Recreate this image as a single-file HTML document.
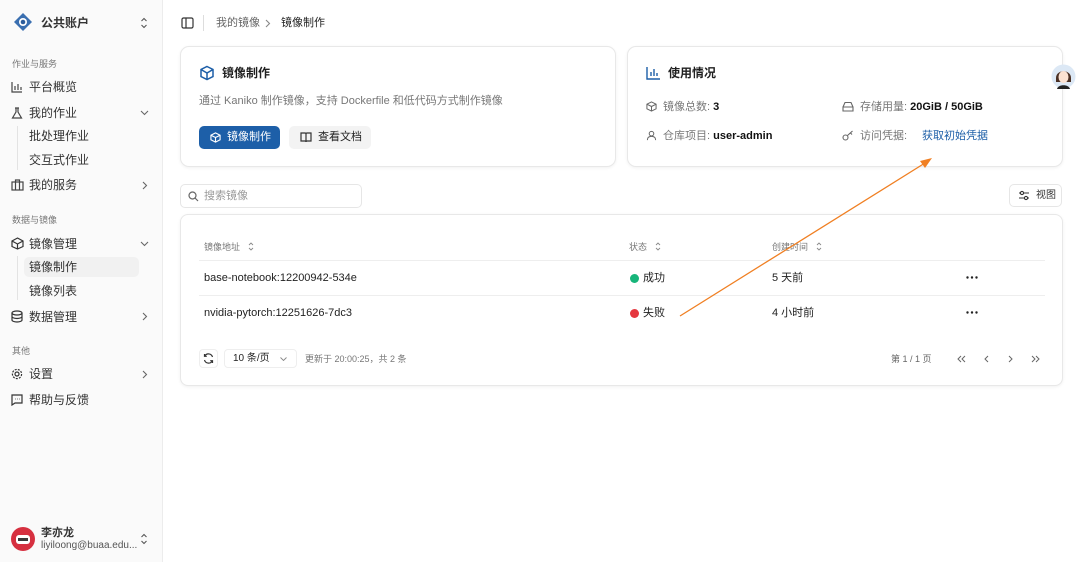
<!DOCTYPE html>
<html><head><meta charset="utf-8"><style>
*{box-sizing:border-box;margin:0;padding:0}
body{width:1080px;height:562px;overflow:hidden;background:#fff;font-family:"Liberation Sans","Noto Sans CJK SC",sans-serif;color:#1f1f1f;position:relative}
.sb{position:absolute;left:0;top:0;width:163px;height:562px;background:#fafafa;border-right:1px solid #ececec}
.a{position:absolute;font-size:12px;color:#333;white-space:nowrap;line-height:14px}
.g{position:absolute;font-size:9px;color:#777;line-height:11px}
.ic{position:absolute}
.card{position:absolute;background:#fff;border:1px solid #e8e8e8;border-radius:9px;box-shadow:0 1px 3px rgba(0,0,0,.06)}
.t{position:absolute;white-space:nowrap;line-height:14px}
</style></head><body>
<div class="sb">
<svg class="ic" style="left:13px;top:12px" width="20" height="20" viewBox="0 0 20 20"><path d="M10 1L19 10L10 19L1 10Z" fill="#3a6fb0"/><circle cx="10" cy="10" r="4" fill="#fff"/><circle cx="10" cy="10" r="2.3" fill="#2c5d9c"/></svg>
<div class="a" style="left:41px;top:16px;font-weight:bold;font-size:12px">公共账户</div>
<svg class="ic" style="left:140px;top:17px" width="8" height="12" viewBox="0 0 8 12" fill="none" stroke="#555" stroke-width="1.1"><path d="M1.5 4L4 1.5L6.5 4M1.5 8L4 10.5L6.5 8"/></svg>
<div class="g" style="left:12px;top:59px">作业与服务</div>
<svg class="ic" style="left:11px;top:81px" width="12" height="12" viewBox="0 0 12 12" fill="none" stroke="#444" stroke-width="1.2"><path d="M1 1V11H11M4 9V5M7 9V3M10 9V6"/></svg>
<div class="a" style="left:29px;top:80px">平台概览</div>
<svg class="ic" style="left:11px;top:107px" width="12" height="12" viewBox="0 0 12 12" fill="none" stroke="#444" stroke-width="1.2"><path d="M4 1H8M5 1V5L1.5 11H10.5L7 5V1"/></svg>
<div class="a" style="left:29px;top:106px">我的作业</div>
<svg class="ic" style="left:140px;top:110px" width="9" height="6" viewBox="0 0 9 6" fill="none" stroke="#666" stroke-width="1.1"><path d="M1 1L4.5 4.5L8 1"/></svg>
<div style="position:absolute;left:17px;top:126px;width:1px;height:44px;background:#e3e3e3"></div>
<div class="a" style="left:29px;top:129px">批处理作业</div>
<div class="a" style="left:29px;top:153px">交互式作业</div>
<svg class="ic" style="left:11px;top:179px" width="13" height="12" viewBox="0 0 13 12" fill="none" stroke="#444" stroke-width="1.2"><rect x="1" y="3" width="11" height="8"/><path d="M4.5 3V1H8.5V3M4.5 3V11M8.5 3V11"/></svg>
<div class="a" style="left:29px;top:178px">我的服务</div>
<svg class="ic" style="left:142px;top:181px" width="6" height="9" viewBox="0 0 6 9" fill="none" stroke="#666" stroke-width="1.1"><path d="M1 1L4.5 4.5L1 8"/></svg>
<div class="g" style="left:12px;top:215px">数据与镜像</div>
<svg class="ic" style="left:11px;top:237px" width="13" height="13" viewBox="0 0 13 13" fill="none" stroke="#333" stroke-width="1.2"><path d="M6.5 1L12 4V9.5L6.5 12L1 9.5V4Z M1 4L6.5 7L12 4M6.5 7V12"/></svg>
<div class="a" style="left:29px;top:237px">镜像管理</div>
<svg class="ic" style="left:140px;top:241px" width="9" height="6" viewBox="0 0 9 6" fill="none" stroke="#666" stroke-width="1.1"><path d="M1 1L4.5 4.5L8 1"/></svg>
<div style="position:absolute;left:17px;top:256px;width:1px;height:44px;background:#e3e3e3"></div>
<div style="position:absolute;left:24px;top:257px;width:115px;height:20px;background:#f1f1f1;border-radius:5px"></div>
<div class="a" style="left:29px;top:260px">镜像制作</div>
<div class="a" style="left:29px;top:284px">镜像列表</div>
<svg class="ic" style="left:11px;top:310px" width="12" height="13" viewBox="0 0 12 13" fill="none" stroke="#333" stroke-width="1.2"><ellipse cx="6" cy="3" rx="5" ry="2"/><path d="M1 3V10C1 11 3 12 6 12S11 11 11 10V3M1 6.5C1 7.5 3 8.5 6 8.5S11 7.5 11 6.5"/></svg>
<div class="a" style="left:29px;top:310px">数据管理</div>
<svg class="ic" style="left:142px;top:312px" width="6" height="9" viewBox="0 0 6 9" fill="none" stroke="#666" stroke-width="1.1"><path d="M1 1L4.5 4.5L1 8"/></svg>
<div class="g" style="left:12px;top:346px">其他</div>
<svg class="ic" style="left:11px;top:368px" width="12" height="12" viewBox="0 0 12 12" fill="none" stroke="#333" stroke-width="1.2"><circle cx="6" cy="6" r="2"/><circle cx="6" cy="6" r="4.6" stroke-dasharray="2 1.2"/></svg>
<div class="a" style="left:29px;top:367px">设置</div>
<svg class="ic" style="left:142px;top:370px" width="6" height="9" viewBox="0 0 6 9" fill="none" stroke="#666" stroke-width="1.1"><path d="M1 1L4.5 4.5L1 8"/></svg>
<svg class="ic" style="left:11px;top:394px" width="12" height="12" viewBox="0 0 12 12" fill="none" stroke="#333" stroke-width="1.2"><path d="M1 1H11V9H4L1 11Z M4 5H4.5M6 5H6.5M8 5H8.5"/></svg>
<div class="a" style="left:29px;top:393px">帮助与反馈</div>
<svg class="ic" style="left:11px;top:527px" width="24" height="24" viewBox="0 0 24 24"><circle cx="12" cy="12" r="12" fill="#d63040"/><rect x="5" y="8" width="14" height="9" rx="3" fill="#fff"/><rect x="7" y="11" width="10" height="3" fill="#3a3a3a"/></svg>
<div class="a" style="left:41px;top:526px;font-weight:bold;font-size:11px">李亦龙</div>
<div class="a" style="left:41px;top:539px;font-size:10px;color:#555">liyiloong@buaa.edu...</div>
<svg class="ic" style="left:140px;top:533px" width="8" height="12" viewBox="0 0 8 12" fill="none" stroke="#555" stroke-width="1.1"><path d="M1.5 4L4 1.5L6.5 4M1.5 8L4 10.5L6.5 8"/></svg>
</div>

<svg class="ic" style="left:181px;top:17px" width="13" height="12" viewBox="0 0 13 12" fill="none" stroke="#333" stroke-width="1.2"><rect x="1" y="1" width="11" height="10" rx="1.5"/><path d="M5 1V11"/></svg>
<div style="position:absolute;left:203px;top:15px;width:1px;height:16px;background:#ddd"></div>
<div class="t" style="left:216px;top:16px;font-size:11px;color:#666">我的镜像</div>
<svg class="ic" style="left:265px;top:19px" width="6" height="9" viewBox="0 0 6 9" fill="none" stroke="#888" stroke-width="1.1"><path d="M1 1L4.5 4.5L1 8"/></svg>
<div class="t" style="left:281px;top:16px;font-size:11px;color:#222">镜像制作</div>

<div class="card" style="left:180px;top:46px;width:436px;height:121px">
<svg class="ic" style="left:18px;top:18px" width="16" height="16" viewBox="0 0 16 16" fill="none" stroke="#1d5fa8" stroke-width="1.5"><path d="M8 1.5L14 4.5V11.5L8 14.5L2 11.5V4.5Z M2 4.5L8 8L14 4.5M8 8V14.5"/></svg>
<div class="t" style="left:41px;top:19px;font-size:12px;font-weight:bold">镜像制作</div>
<div class="t" style="left:18px;top:47px;font-size:11px;color:#777">通过 Kaniko 制作镜像，支持 Dockerfile 和低代码方式制作镜像</div>
<div style="position:absolute;left:18px;top:79px;width:81px;height:23px;background:#1d5fa8;border-radius:5px;color:#fff;font-size:11px;line-height:23px;padding-left:28px">镜像制作</div>
<svg class="ic" style="left:29px;top:85px" width="11" height="11" viewBox="0 0 12 12" fill="none" stroke="#fff" stroke-width="1.2"><path d="M6 1L11 3.5V8.5L6 11L1 8.5V3.5Z M1 3.5L6 6L11 3.5M6 6V11"/></svg>
<div style="position:absolute;left:108px;top:79px;width:82px;height:23px;background:#f3f3f3;border-radius:5px;font-size:11px;line-height:23px;padding-left:29px">查看文档</div>
<svg class="ic" style="left:119px;top:85px" width="12" height="11" viewBox="0 0 12 11" fill="none" stroke="#333" stroke-width="1.2"><path d="M1 1H5C5.6 1 6 1.4 6 2V10C6 9.4 5.6 9 5 9H1Z M11 1H7C6.4 1 6 1.4 6 2V10C6 9.4 6.4 9 7 9H11Z"/></svg>
</div>

<div class="card" style="left:627px;top:46px;width:436px;height:121px">
<svg class="ic" style="left:18px;top:19px" width="15" height="14" viewBox="0 0 15 14" fill="none" stroke="#1d5fa8" stroke-width="1.4"><path d="M1 1V13H14M5 10V6M8 10V3M11 10V7"/></svg>
<div class="t" style="left:40px;top:19px;font-size:12px;font-weight:bold">使用情况</div>
<svg class="ic" style="left:18px;top:54px" width="11" height="11" viewBox="0 0 12 12" fill="none" stroke="#666" stroke-width="1.1"><path d="M6 1L11 3.5V8.5L6 11L1 8.5V3.5Z M1 3.5L6 6L11 3.5M6 6V11"/></svg>
<div class="t" style="left:35px;top:53px;font-size:11px;color:#777">镜像总数: <b style="color:#111">3</b></div>
<svg class="ic" style="left:18px;top:83px" width="11" height="11" viewBox="0 0 12 12" fill="none" stroke="#666" stroke-width="1.1"><circle cx="6" cy="4" r="2.5"/><path d="M1.5 11C1.5 8 3.5 7 6 7S10.5 8 10.5 11"/></svg>
<div class="t" style="left:35px;top:82px;font-size:11px;color:#777">仓库项目: <b style="color:#111">user-admin</b></div>
<svg class="ic" style="left:214px;top:54px" width="12" height="11" viewBox="0 0 12 11" fill="none" stroke="#666" stroke-width="1.1"><path d="M1 6L3 1.5H9L11 6V10H1Z M1 6H11"/></svg>
<div class="t" style="left:232px;top:53px;font-size:11px;color:#777">存储用量: <b style="color:#111">20GiB / 50GiB</b></div>
<svg class="ic" style="left:214px;top:83px" width="12" height="11" viewBox="0 0 12 11" fill="none" stroke="#666" stroke-width="1.1"><circle cx="3.5" cy="7.5" r="2.5"/><path d="M5.5 5.5L10.5 1M8.5 3L10 4.5"/></svg>
<div class="t" style="left:232px;top:82px;font-size:11px;color:#777">访问凭据:</div>
<div class="t" style="left:294px;top:82px;font-size:11px;color:#1d5fa8">获取初始凭据</div>
</div>

<svg class="ic" style="left:1051px;top:64px" width="25" height="25" viewBox="0 0 25 25"><circle cx="12.5" cy="12.5" r="12" fill="#dce8f5"/><path d="M5 14C5 5 20 5 20 14V18H5Z" fill="#4a3024"/><ellipse cx="12.5" cy="13" rx="5" ry="6" fill="#fbe2d2"/><path d="M6 25C7 20 18 20 19 25Z" fill="#222"/></svg>

<div style="position:absolute;left:180px;top:184px;width:182px;height:24px;border:1px solid #e6e6e6;border-radius:5px"></div>
<svg class="ic" style="left:188px;top:191px" width="11" height="11" viewBox="0 0 11 11" fill="none" stroke="#666" stroke-width="1.2"><circle cx="4.5" cy="4.5" r="3.5"/><path d="M7 7L10 10"/></svg>
<div class="t" style="left:204px;top:189px;font-size:11px;color:#999">搜索镜像</div>

<div style="position:absolute;left:1009px;top:184px;width:53px;height:23px;border:1px solid #e6e6e6;border-radius:5px"></div>
<svg class="ic" style="left:1018px;top:190px" width="12" height="11" viewBox="0 0 12 11" fill="none" stroke="#333" stroke-width="1.1"><path d="M1 3H11M1 8H11"/><circle cx="4" cy="3" r="1.6" fill="#fff"/><circle cx="8" cy="8" r="1.6" fill="#fff"/></svg>
<div class="t" style="left:1036px;top:189px;font-size:10px;color:#333">视图</div>

<div class="card" style="left:180px;top:214px;width:883px;height:172px;border-radius:8px">
<div class="t" style="left:23px;top:25px;font-size:9px;color:#777">镜像地址</div>
<div class="t" style="left:448px;top:25px;font-size:9px;color:#777">状态</div>
<div class="t" style="left:591px;top:25px;font-size:9px;color:#777">创建时间</div>
<svg class="ic" style="left:67px;top:27px" width="6" height="9" viewBox="0 0 6 9" fill="none" stroke="#888" stroke-width="0.9"><path d="M1 3L3 1L5 3M1 6L3 8L5 6"/></svg>
<svg class="ic" style="left:474px;top:27px" width="6" height="9" viewBox="0 0 6 9" fill="none" stroke="#888" stroke-width="0.9"><path d="M1 3L3 1L5 3M1 6L3 8L5 6"/></svg>
<svg class="ic" style="left:635px;top:27px" width="6" height="9" viewBox="0 0 6 9" fill="none" stroke="#888" stroke-width="0.9"><path d="M1 3L3 1L5 3M1 6L3 8L5 6"/></svg>
<div style="position:absolute;left:18px;top:45px;width:846px;height:1px;background:#eee"></div>
<div class="t" style="left:23px;top:56px;font-size:11px">base-notebook:12200942-534e</div>
<div style="position:absolute;left:449px;top:59px;width:9px;height:9px;border-radius:50%;background:#17b57a"></div>
<div class="t" style="left:462px;top:56px;font-size:11px">成功</div>
<div class="t" style="left:591px;top:56px;font-size:11px">5 天前</div>
<svg class="ic" style="left:785px;top:61px" width="12" height="3" viewBox="0 0 12 3" fill="#222"><circle cx="1.5" cy="1.5" r="1.2"/><circle cx="6" cy="1.5" r="1.2"/><circle cx="10.5" cy="1.5" r="1.2"/></svg>
<div style="position:absolute;left:18px;top:80px;width:846px;height:1px;background:#eee"></div>
<div class="t" style="left:23px;top:91px;font-size:11px">nvidia-pytorch:12251626-7dc3</div>
<div style="position:absolute;left:449px;top:94px;width:9px;height:9px;border-radius:50%;background:#e5383f"></div>
<div class="t" style="left:462px;top:91px;font-size:11px">失败</div>
<div class="t" style="left:591px;top:91px;font-size:11px">4 小时前</div>
<svg class="ic" style="left:785px;top:96px" width="12" height="3" viewBox="0 0 12 3" fill="#222"><circle cx="1.5" cy="1.5" r="1.2"/><circle cx="6" cy="1.5" r="1.2"/><circle cx="10.5" cy="1.5" r="1.2"/></svg>
<div style="position:absolute;left:18px;top:134px;width:19px;height:19px;border:1px solid #eee;border-radius:4px"></div>
<svg class="ic" style="left:22px;top:138px" width="11" height="11" viewBox="0 0 11 11" fill="none" stroke="#333" stroke-width="1.2"><path d="M9.5 4A4.2 4.2 0 0 0 1.8 3M1.5 7A4.2 4.2 0 0 0 9.2 8M1.5 1V3.3H3.8M9.5 10V7.7H7.2"/></svg>
<div style="position:absolute;left:43px;top:134px;width:73px;height:19px;border:1px solid #eee;border-radius:4px;font-size:10px;line-height:17px;padding-left:8px">10 条/页</div>
<svg class="ic" style="left:99px;top:142px" width="7" height="4" viewBox="0 0 7 4" fill="none" stroke="#888" stroke-width="0.9"><path d="M0.5 0.5L3.5 3.5L6.5 0.5"/></svg>
<div class="t" style="left:124px;top:137px;font-size:9px;color:#777">更新于 20:00:25，共 2 条</div>
<div class="t" style="left:710px;top:137px;font-size:9px;color:#666">第 1 / 1 页</div>
<svg class="ic" style="left:776px;top:140px" width="9" height="8" viewBox="0 0 9 8" fill="none" stroke="#666" stroke-width="1"><path d="M4 1L1 4L4 7M8 1L5 4L8 7"/></svg>
<svg class="ic" style="left:803px;top:140px" width="5" height="8" viewBox="0 0 5 8" fill="none" stroke="#666" stroke-width="1"><path d="M4 1L1 4L4 7"/></svg>
<svg class="ic" style="left:827px;top:140px" width="5" height="8" viewBox="0 0 5 8" fill="none" stroke="#666" stroke-width="1"><path d="M1 1L4 4L1 7"/></svg>
<svg class="ic" style="left:850px;top:140px" width="9" height="8" viewBox="0 0 9 8" fill="none" stroke="#666" stroke-width="1"><path d="M1 1L4 4L1 7M5 1L8 4L5 7"/></svg>
</div>

<svg class="ic" style="left:0;top:0" width="1080" height="562" viewBox="0 0 1080 562"><path d="M680 316L925 163" stroke="#f07f22" stroke-width="1.3"/><path d="M932 158L920 161L925 168Z" fill="#f07f22"/></svg>
</body></html>
